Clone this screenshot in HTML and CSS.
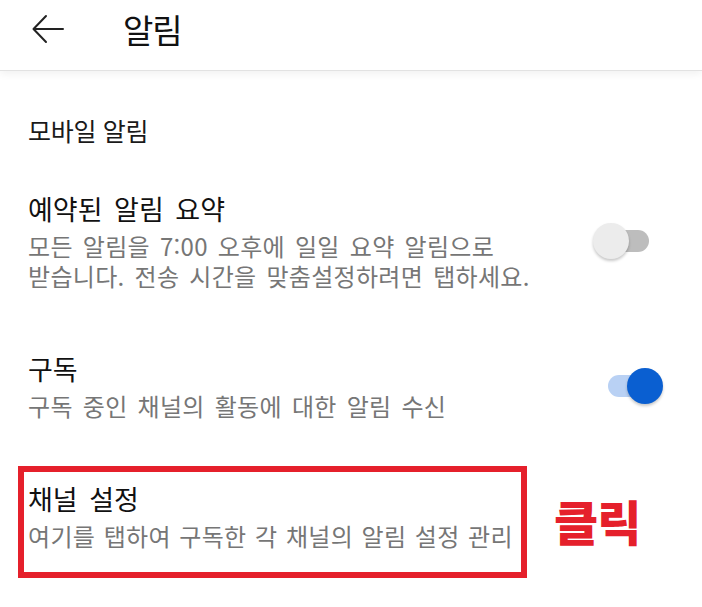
FILE: index.html
```html
<!DOCTYPE html>
<html lang="ko">
<head>
  <meta charset="UTF-8">
  <title>알림</title>
  <link rel="stylesheet" href="styles.css">
</head>
<body>
  <header class="topbar">
    <button class="back-btn" aria-label="뒤로">
      <svg width="32" height="30" viewBox="0 0 32 30" fill="none" stroke="#222" stroke-width="2" stroke-linecap="round" stroke-linejoin="round">
        <path d="M2 15 H31 M14 2 L1.5 15 L14 28" />
      </svg>
    </button>
    <h1 class="page-title">알림</h1>
  </header>

  <main class="settings">
    <h2 class="section-title">모바일 알림</h2>

    <div class="setting-row">
      <div class="setting-text">
        <p class="setting-name">예약된 알림 요약</p>
        <p class="setting-desc">모든 알림을 7:00 오후에 일일 요약 알림으로</p>
        <p class="setting-desc">받습니다. 전송 시간을 맞춤설정하려면 탭하세요.</p>
      </div>
      <span class="switch"><span class="track"></span><span class="thumb"></span></span>
    </div>

    <div class="setting-row second">
      <div class="setting-text">
        <p class="setting-name">구독</p>
        <p class="setting-desc">구독 중인 채널의 활동에 대한 알림 수신</p>
      </div>
      <span class="switch on"><span class="track"></span><span class="thumb"></span></span>
    </div>

    <div class="callout-row">
      <div class="highlight">
        <p class="setting-name">채널 설정</p>
        <p class="setting-desc">여기를 탭하여 구독한 각 채널의 알림 설정 관리</p>
      </div>
      <span class="click-label">클릭</span>
    </div>
  </main>
</body>
</html>
```

FILE: styles.css
```css
body {
  margin: 0;
  background: #fff;
  color: #111;
  font-family: "Noto Sans CJK KR", "Noto Sans", sans-serif;
}

p, h1, h2 {
  margin: 0;
  font-weight: normal;
}

.topbar {
  height: 71px;
  display: flex;
  align-items: center;
  padding-left: 32px;
  border-bottom: 1px solid #e2e2e2;
  box-shadow: 0 3px 8px rgba(0, 0, 0, 0.06);
  box-sizing: border-box;
}

.back-btn {
  background: none;
  border: none;
  padding: 0;
  width: 32px;
  height: 30px;
  margin-top: -12px;
  cursor: pointer;
}

.page-title {
  margin-left: 59px;
  margin-top: -12px;
  font-size: 33px;
  line-height: 40px;
  letter-spacing: -1px;
  color: #111;
}

.settings {
  padding: 0 28px;
}

.section-title {
  margin-top: 42px;
  font-size: 25px;
  line-height: 34px;
  letter-spacing: -0.3px;
  color: #1a1a1a;
}

.setting-row {
  display: flex;
  align-items: center;
  justify-content: space-between;
  margin-top: 44px;
  padding-right: 12px;
}

.setting-row.second {
  margin-top: 60px;
}

.setting-name {
  font-size: 27px;
  line-height: 36px;
  word-spacing: 4px;
  color: #111;
  margin-bottom: 4px;
}

.setting-desc {
  font-size: 24px;
  line-height: 30px;
  letter-spacing: 0.3px;
  word-spacing: 3px;
  white-space: nowrap;
  color: #767676;
}

.switch {
  position: relative;
  width: 69px;
  height: 36px;
  flex-shrink: 0;
}

.switch .track {
  position: absolute;
  left: 12px;
  top: 7px;
  width: 44px;
  height: 22px;
  border-radius: 11px;
  background: #bdbdbd;
}

.switch .thumb {
  position: absolute;
  left: 0;
  top: 0;
  width: 36px;
  height: 36px;
  border-radius: 50%;
  background: #ececec;
  box-shadow: 0 2px 3px rgba(0, 0, 0, 0.22);
}

.switch.on .track {
  left: 15px;
  background: #b9d1f4;
}

.switch.on .thumb {
  left: 34px;
  background: #0a5fd1;
}

.callout-row {
  display: flex;
  align-items: center;
  margin-top: 45px;
  margin-left: -10px;
}

.highlight {
  width: 493px;
  border: 6px solid #e5202b;
  padding: 9px 0 21px 4px;
}

.highlight .setting-desc {
  word-spacing: 1.5px;
}

.click-label {
  margin-left: 27px;
  margin-top: -4px;
  font-size: 48px;
  font-weight: 900;
  letter-spacing: -1px;
  color: #e5202b;
}
```
